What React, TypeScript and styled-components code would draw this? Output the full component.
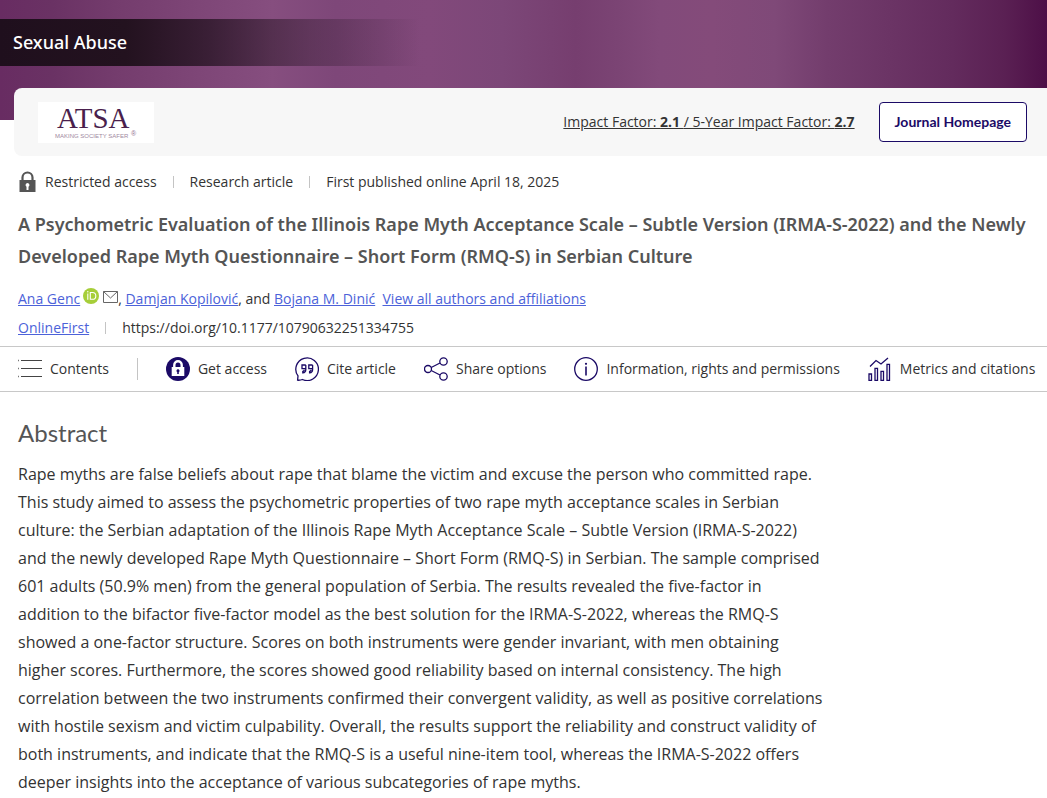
import React from "react";
import styled, { createGlobalStyle } from "styled-components";

const heading = '"Noto Sans", "Open Sans", sans-serif';
const display = '"Lato", "Open Sans", sans-serif';
const body = '"Open Sans", "Noto Sans", sans-serif';
const navy = "#1b0a66";

const GlobalStyle = createGlobalStyle`
  *, *::before, *::after { box-sizing: border-box; }
  body {
    margin: 0;
    background: #fff;
    color: #333;
    font: 400 14px/20px ${body};
  }
  h1, h2, p { margin: 0; }
`;

const Masthead = styled.header`
  padding-top: 19px;
  background: linear-gradient(
      90deg,
      #682c62 0%,
      #6a3264 5%,
      #743c6d 11%,
      #7e4677 19%,
      #864e7f 26%,
      #7e4779 32%,
      #82497b 41%,
      #7c4778 48%,
      #763e6f 55%,
      #7b4474 59%,
      #824a7a 63%,
      #844b7a 68%,
      #7f4978 74%,
      #733d6d 79%,
      #6b3465 85%,
      #632b5d 91%,
      #5a2053 96%,
      #4d0f47 100%
    )
    top left / 100% 120px no-repeat;
`;

const JournalTitle = styled.div`
  max-width: 420px;
  padding: 0 13px;
  margin-bottom: 22px;
  background: linear-gradient(
    90deg,
    #1f0f1d 0%,
    #23121f 30%,
    rgba(35, 18, 32, 0.75) 50%,
    rgba(35, 18, 32, 0.35) 74%,
    rgba(35, 18, 32, 0) 100%
  );
  color: #fff;
  font: 500 18px/47px ${heading};
`;

const JournalBar = styled.div`
  display: flex;
  align-items: center;
  gap: 24px;
  min-height: 68px;
  margin-left: 14px;
  padding: 0 20px 0 24px;
  border-radius: 8px 0 0 8px;
  background: #f7f7f7;
`;

const SocietyLogo = styled.a`
  display: flex;
  margin-right: auto;
  background: #fff;
`;

const ImpactLink = styled.a`
  color: #333;
  text-underline-offset: 1px;
`;

const HomeButton = styled.button`
  height: 40px;
  padding: 0 15px;
  border: 1px solid ${navy};
  border-radius: 4px;
  background: #fff;
  color: ${navy};
  font: 700 14px/20px ${display};
`;

const Article = styled.main`
  display: block;
`;

const Section = styled.div`
  padding: 0 10px 0 18px;
`;

const MetaRow = styled.div<{ $top: number }>`
  display: flex;
  align-items: center;
  gap: 16px;
  margin-top: ${(p) => p.$top}px;
`;

const WithIcon = styled.span`
  display: flex;
  align-items: center;
  gap: 8px;
`;

const Divider = styled.span<{ $tall?: boolean }>`
  width: 1px;
  height: ${(p) => (p.$tall ? 22 : 12)}px;
  background: #c4c4c4;
`;

const ArticleTitle = styled.h1`
  margin-top: 15px;
  color: #555;
  font: 600 18px/32px ${heading};
`;

const Authors = styled.p`
  margin-top: 16px;
`;

const TextLink = styled.a`
  color: #4c62d9;
  text-underline-offset: 1px;
`;

const InlineIcon = styled.svg`
  margin-left: 3px;
  vertical-align: baseline;
`;

const Toolbar = styled.nav`
  display: flex;
  flex-wrap: wrap;
  align-items: center;
  gap: 8px 28px;
  min-height: 46px;
  margin-top: 8px;
  padding: 0 10px 0 18px;
  border: solid #c8c8c8;
  border-width: 1px 0;
`;

const Tool = styled.button`
  display: flex;
  align-items: center;
  gap: 8px;
  padding: 0;
  border: 0;
  background: none;
  color: #333;
  font: 400 14px/20px ${body};
`;

const AbstractTitle = styled.h2`
  margin-top: 25px;
  color: #555;
  font: 400 24px/32px ${display};
`;

const Abstract = styled.p`
  max-width: 808px;
  margin-top: 11px;
  font-size: 16px;
  line-height: 28px;
`;

const Padlock = () => (
  <svg width="19" height="22" viewBox="0 0 19 22" aria-hidden="true">
    <path d="M4.5 10V6.500a5 5 0 0 1 10 0V10" fill="none" stroke="#555" strokeWidth="2.200" />
    <path d="M1.500 9h16v12h-16z" fill="#555" />
    <path d="M9.500 12a2 2 0 0 0-1 3.700V19h2v-3.300a2 2 0 0 0-1-3.700z" fill="#fff" />
  </svg>
);

const OrcidIcon = () => (
  <InlineIcon width="16" height="16" viewBox="0 0 16 16" aria-label="ORCID">
    <circle cx="8" cy="8" r="8" fill="#a6ce39" />
    <path d="M4.800 5.500v6.300M7.300 4.500h2.100a3.400 3.400 0 0 1 0 6.800H7.300z" fill="none" stroke="#fff" strokeWidth="1.100" />
    <circle cx="4.800" cy="3.800" r=".7" fill="#fff" />
  </InlineIcon>
);

const MailIcon = () => (
  <InlineIcon width="16" height="13" viewBox="0 0 16 13" aria-label="Email">
    <path d="M1.500.5h14v11h-14zM1.500.5l7 6.500 7-6.500" fill="none" stroke="#666" />
  </InlineIcon>
);

const Icon = ({ children }: { children: React.ReactNode }) => (
  <svg width="24" height="24" viewBox="0 0 24 24" fill="none" stroke={navy} strokeWidth="1.300" aria-hidden="true">
    {children}
  </svg>
);

const ContentsIcon = () => (
  <Icon>
    <path d="M3 3.500h21M3 11.500h21M3 19.500h21" stroke="#444" strokeWidth="1.200" />
    <path d="M0 3.500h1M0 11.500h1M0 19.500h1" stroke="#777" />
  </Icon>
);

const AccessIcon = () => (
  <Icon>
    <circle cx="12" cy="12" r="12" fill={navy} stroke="none" />
    <path d="M8.300 11V8a3.700 3.700 0 0 1 7.400 0V11" stroke="#fff" strokeWidth="2.400" />
    <path d="M5.700 10h12.600v9H5.700z" fill="#fff" stroke="none" />
    <path d="M12 12.300a1.500 1.500 0 0 0-.8 2.800v2h1.600v-2a1.500 1.500 0 0 0-.8-2.800z" fill={navy} stroke="none" />
  </Icon>
);

const CiteIcon = () => (
  <Icon>
    <path d="M2.600 23.200 3 18.900A11.300 11.300 0 1 1 7.400 22.500c-1.400.7-3 .8-4.800.7z" />
    <path d="M10.800 8h-3.800v3.700h3.800V8v4.400c0 2-1 3.200-3 3.400v-1.300c.9-.2 1.400-.8 1.400-1.700M17.600 8h-3.800v3.700h3.800V8v4.400c0 2-1 3.200-3 3.400v-1.300c.9-.2 1.400-.8 1.400-1.700" />
  </Icon>
);

const ShareIcon = () => (
  <Icon>
    <circle cx="4" cy="12" r="3.500" />
    <circle cx="19.500" cy="4.500" r="3.700" />
    <circle cx="19.500" cy="19.500" r="3.700" />
    <path d="M7.200 10.500 16 6M7.200 13.500 16 18" />
  </Icon>
);

const InfoIcon = () => (
  <Icon>
    <circle cx="12" cy="12" r="11.300" />
    <path d="M12 9.500v9" strokeWidth="1.600" />
    <circle cx="12" cy="6.800" r="1.100" fill={navy} stroke="none" />
  </Icon>
);

const MetricsIcon = () => (
  <Icon>
    <path d="M1 17h2.500v6.300H1zM7 11.300h2.500v12H7zM13 14.300h2.500v9H13zM19 7.300h2.500v16H19z" />
    <path d="M2 9.500 8 3.500l5 3.500 7-6" />
  </Icon>
);

const tools: [string, () => React.ReactElement][] = [
  ["Get access", AccessIcon],
  ["Cite article", CiteIcon],
  ["Share options", ShareIcon],
  ["Information, rights and permissions", InfoIcon],
  ["Metrics and citations", MetricsIcon],
];

export default function App() {
  return (
    <>
      <GlobalStyle />
      <Masthead>
        <JournalTitle>Sexual Abuse</JournalTitle>
        <JournalBar>
          <SocietyLogo href="#">
            <svg width="116" height="41" viewBox="0 0 116 41" role="img" aria-label="ATSA">
              <text x="19" y="26" fontFamily="Liberation Serif, serif" fontSize="29" fill="#4a1f4d">ATSA</text>
              <text x="17" y="36" fontFamily="Liberation Sans, sans-serif" fontSize="6" fill="#a088a0">MAKING SOCIETY SAFER</text>
              <text x="93" y="34" fontFamily="Liberation Sans, sans-serif" fontSize="7" fill="#8f708f">®</text>
            </svg>
          </SocietyLogo>
          <ImpactLink href="#">
            Impact Factor: <b>2.1 </b>/ 5-Year Impact Factor: <b>2.7</b>
          </ImpactLink>
          <HomeButton type="button">Journal Homepage</HomeButton>
        </JournalBar>
      </Masthead>
      <Article>
        <Section>
          <MetaRow $top={15}>
            <WithIcon>
              <Padlock />
              Restricted access
            </WithIcon>
            <Divider />
            <span>Research article</span>
            <Divider />
            <span>First published online April 18, 2025</span>
          </MetaRow>
          <ArticleTitle>
            A Psychometric Evaluation of the Illinois Rape Myth Acceptance Scale – Subtle Version (IRMA-S-2022) and the
            Newly Developed Rape Myth Questionnaire – Short Form (RMQ-S) in Serbian Culture
          </ArticleTitle>
          <Authors>
            <TextLink href="#">Ana Genc</TextLink>
            <OrcidIcon />
            <MailIcon />, <TextLink href="#">Damjan Kopilović</TextLink>, and <TextLink href="#">Bojana M. Dinić</TextLink>
            &nbsp; <TextLink href="#">View all authors and affiliations</TextLink>
          </Authors>
          <MetaRow $top={9}>
            <TextLink href="#">OnlineFirst</TextLink>
            <Divider />
            <span>https://doi.org/10.1177/10790632251334755</span>
          </MetaRow>
        </Section>
        <Toolbar aria-label="Article tools">
          <Tool type="button">
            <ContentsIcon />
            Contents
          </Tool>
          <Divider $tall />
          {tools.map(([label, Glyph]) => (
            <Tool type="button" key={label}>
              <Glyph />
              {label}
            </Tool>
          ))}
        </Toolbar>
        <Section>
          <AbstractTitle>Abstract</AbstractTitle>
          <Abstract>
            Rape myths are false beliefs about rape that blame the victim and excuse the person who committed rape. This
            study aimed to assess the psychometric properties of two rape myth acceptance scales in Serbian culture: the
            Serbian adaptation of the Illinois Rape Myth Acceptance Scale – Subtle Version (IRMA-S-2022) and the newly
            developed Rape Myth Questionnaire – Short Form (RMQ-S) in Serbian. The sample comprised 601 adults (50.9%
            men) from the general population of Serbia. The results revealed the five-factor in addition to the bifactor
            five-factor model as the best solution for the IRMA-S-2022, whereas the RMQ-S showed a one-factor structure.
            Scores on both instruments were gender invariant, with men obtaining higher scores. Furthermore, the scores
            showed good reliability based on internal consistency. The high correlation between the two instruments
            confirmed their convergent validity, as well as positive correlations with hostile sexism and victim
            culpability. Overall, the results support the reliability and construct validity of both instruments, and
            indicate that the RMQ-S is a useful nine-item tool, whereas the IRMA-S-2022 offers deeper insights into the
            acceptance of various subcategories of rape myths.
          </Abstract>
        </Section>
      </Article>
    </>
  );
}
